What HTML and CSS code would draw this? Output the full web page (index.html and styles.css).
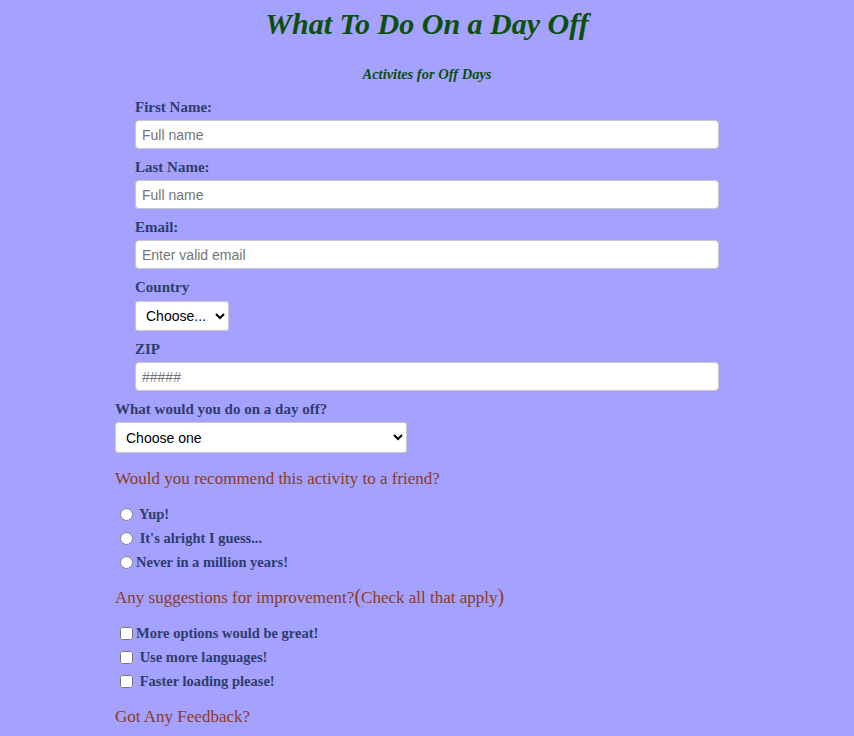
FILE: index.html
```html
<!DOCTYPE html>
<html lang="en">
<head>
<meta charset="utf-8">
<title>What To Do On a Day Off</title>
<link rel="stylesheet" href="styles.css">
</head>
<body>
<h1 class="title">What To Do On a Day Off</h1>
<h2 class="subtitle">Activites for Off Days</h2>
<form class="survey">
  <div class="fields">
    <div class="field">
      <label class="lbl" for="fn">First Name:</label>
      <input class="txt" id="fn" type="text" placeholder="Full name">
    </div>
    <div class="field">
      <label class="lbl" for="ln">Last Name:</label>
      <input class="txt" id="ln" type="text" placeholder="Full name">
    </div>
    <div class="field">
      <label class="lbl" for="em">Email:</label>
      <input class="txt" id="em" type="email" placeholder="Enter valid email">
    </div>
    <div class="field">
      <label class="lbl" for="co">Country</label>
      <select class="sel country" id="co"><option>Choose...</option></select>
    </div>
    <div class="field">
      <label class="lbl" for="zip">ZIP</label>
      <input class="txt" id="zip" type="text" placeholder="#####">
    </div>
  </div>
  <div class="field">
    <label class="lbl" for="act">What would you do on a day off?</label>
    <select class="sel activity" id="act"><option>Choose one</option></select>
  </div>
  <p class="question">Would you recommend this activity to a friend?</p>
  <div class="options">
    <label class="opt"><input type="radio" name="rec"> Yup!</label>
    <label class="opt"><input type="radio" name="rec"> It's alright I guess...</label>
    <label class="opt"><input type="radio" name="rec">Never in a million years!</label>
  </div>
  <p class="question">Any suggestions for improvement?<span class="paren">(</span>Check all that apply<span class="paren">)</span></p>
  <div class="options">
    <label class="opt"><input type="checkbox">More options would be great!</label>
    <label class="opt"><input type="checkbox"> Use more languages!</label>
    <label class="opt"><input type="checkbox"> Faster loading please!</label>
  </div>
  <p class="question">Got Any Feedback?</p>
</form>
</body>
</html>
```
FILE: styles.css
```css
body {
  margin: 0;
  background: #a4a2fe;
  font-family: "Liberation Serif", "Times New Roman", serif;
}
.title {
  margin: 4px 0 0;
  text-align: center;
  font-style: italic;
  font-weight: bold;
  font-size: 30px;
  line-height: 40px;
  color: #0b4f0b;
}
.subtitle {
  margin: 20px 0 0;
  text-align: center;
  font-style: italic;
  font-weight: bold;
  font-size: 14.5px;
  line-height: 20px;
  color: #0b4f0b;
}
.survey {
  padding-left: 115px;
  padding-top: 13px;
}
.fields {
  padding-left: 20px;
  width: 584px;
}
.field {
  margin-bottom: 8px;
}
.lbl {
  display: block;
  font-size: 15px;
  font-weight: bold;
  line-height: 20px;
  color: #2e3d6c;
  margin-bottom: 3px;
}
.txt {
  display: block;
  box-sizing: border-box;
  width: 584px;
  height: 29px;
  margin: 0;
  padding: 0 6px;
  border: 1px solid #c8c8c8;
  border-radius: 4px;
  background: #fff;
  font-family: "Liberation Sans", Arial, sans-serif;
  font-size: 14px;
  color: #333;
}
.txt::placeholder {
  color: #757575;
}
.sel {
  display: block;
  box-sizing: border-box;
  margin: 4px 0 0;
  background: #fff;
  border: 1px solid #c8c8c8;
  border-radius: 3px;
  font-family: "Liberation Sans", Arial, sans-serif;
  font-size: 14px;
  color: #000;
  padding: 0 6px;
}
.country {
  width: 94px;
  height: 30px;
}
.activity {
  width: 292px;
  height: 31px;
  margin-top: 3px;
}
.question {
  margin: 15px 0 0;
  font-size: 17px;
  line-height: 22px;
  height: 22px;
  color: #8c3b22;
}
.paren {
  font-size: 20px;
  line-height: 0;
}
.options {
  margin-top: 12px;
}
.opt {
  display: flex;
  align-items: center;
  height: 24px;
  font-size: 14.5px;
  font-weight: bold;
  color: #2e3d6c;
  white-space: pre;
}
.opt input {
  margin: 0 3px 0 5px;
  width: 13px;
  height: 13px;
}
.options + .question {
  margin-top: 13px;
}
```
